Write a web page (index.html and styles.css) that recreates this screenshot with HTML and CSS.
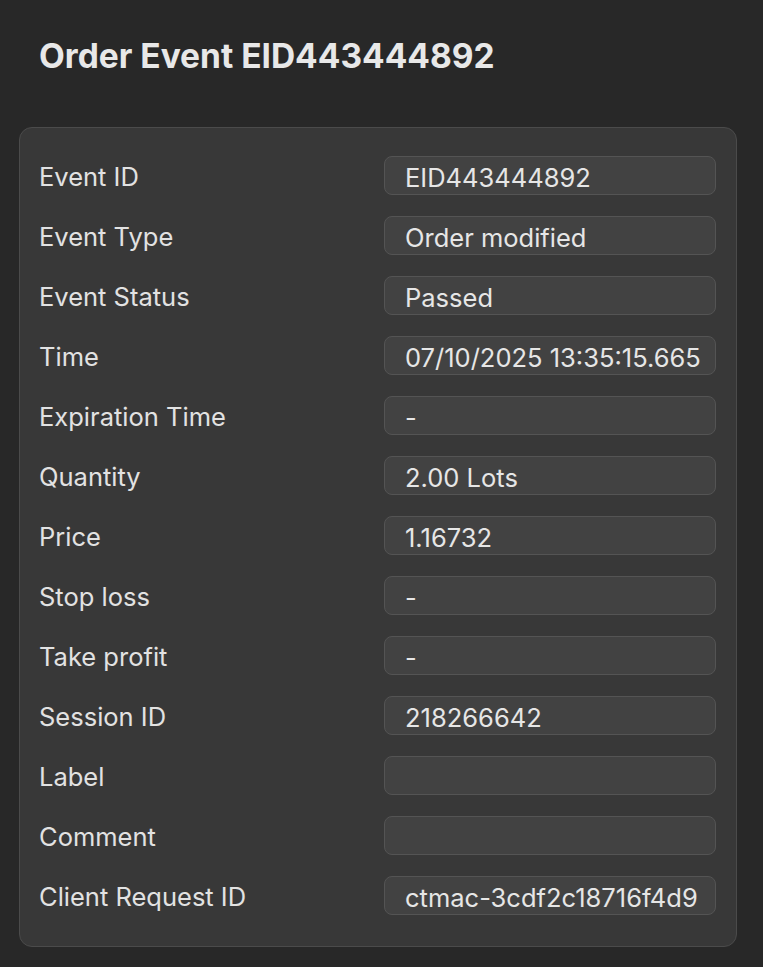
FILE: index.html
```html
<!DOCTYPE html>
<html>
<head>
<meta charset="utf-8">
<link rel="stylesheet" href="styles.css">
</head>
<body>
<div class="page">
  <h1 class="title">Order Event EID443444892</h1>
  <div class="panel">
    <div class="row"><span class="label">Event ID</span><div class="field"><span class="value">EID443444892</span></div></div>
    <div class="row"><span class="label">Event Type</span><div class="field"><span class="value">Order modified</span></div></div>
    <div class="row"><span class="label">Event Status</span><div class="field"><span class="value">Passed</span></div></div>
    <div class="row"><span class="label">Time</span><div class="field"><span class="value">07/10/2025 13:35:15.665</span></div></div>
    <div class="row"><span class="label">Expiration Time</span><div class="field"><span class="value">-</span></div></div>
    <div class="row"><span class="label">Quantity</span><div class="field"><span class="value">2.00 Lots</span></div></div>
    <div class="row"><span class="label">Price</span><div class="field"><span class="value">1.16732</span></div></div>
    <div class="row"><span class="label">Stop loss</span><div class="field"><span class="value">-</span></div></div>
    <div class="row"><span class="label">Take profit</span><div class="field"><span class="value">-</span></div></div>
    <div class="row"><span class="label">Session ID</span><div class="field"><span class="value">218266642</span></div></div>
    <div class="row"><span class="label">Label</span><div class="field"><span class="value"></span></div></div>
    <div class="row"><span class="label">Comment</span><div class="field"><span class="value"></span></div></div>
    <div class="row"><span class="label">Client Request ID</span><div class="field"><span class="value">ctmac-3cdf2c18716f4d9</span></div></div>
  </div>
</div>
</body>
</html>
```
FILE: styles.css
```css
html, body {
  margin: 0;
  padding: 0;
  background: #282828;
}
body {
  font-family: Inter, "Noto Sans", sans-serif;
  color: #e6e6e6;
  width: 763px;
  height: 967px;
  overflow: hidden;
}
.page {
  padding: 36px 26px 0 19px;
}
.title {
  margin: 0 0 0 20px;
  font-size: 33.5px;
  font-weight: 700;
  line-height: 40px;
  color: #e8e8e8;
  letter-spacing: 0;
}
.panel {
  margin-top: 51px;
  width: 718px;
  box-sizing: border-box;
  background: #383838;
  border: 1.5px solid #4b4b4b;
  border-radius: 13px;
  padding: 28px 20px 31px 19px;
  display: flex;
  flex-direction: column;
  gap: 21px;
}
.row {
  display: flex;
  align-items: center;
  justify-content: space-between;
  height: 39px;
}
.label {
  font-size: 25.5px;
  line-height: 39px;
  padding-top: 2px;
  color: #e2e2e2;
  white-space: nowrap;
}
.field {
  width: 332px;
  height: 39px;
  box-sizing: border-box;
  background: #424242;
  border: 1px solid #545454;
  border-radius: 8px;
  padding: 0 12px 0 20px;
  font-size: 25.5px;
  line-height: 39px;
  color: #e6e6e6;
}
.value {
  display: block;
  white-space: nowrap;
  overflow: hidden;
  height: 37px;
  padding-top: 1px;
}
```
